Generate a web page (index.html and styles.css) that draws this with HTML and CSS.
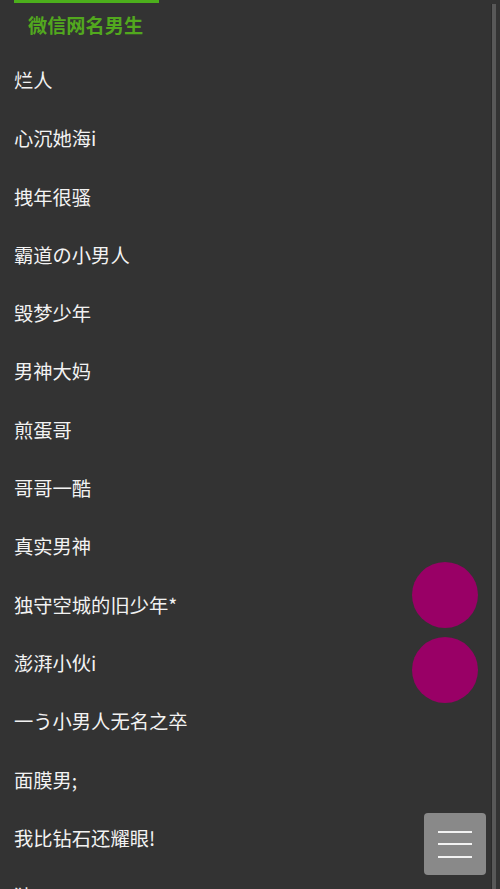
FILE: index.html
```html
<!DOCTYPE html>
<html lang="zh">
<head>
<meta charset="utf-8">
<title>微信网名男生</title>
<link rel="stylesheet" href="styles.css">
</head>
<body>
<div class="page">
  <div class="tab-bar"></div>
  <h1 class="title">微信网名男生</h1>
  <ul class="names">
    <li>烂人</li>
    <li>心沉她海i</li>
    <li>拽年很骚</li>
    <li>霸道の小男人</li>
    <li>毁梦少年</li>
    <li>男神大妈</li>
    <li>煎蛋哥</li>
    <li>哥哥一酷</li>
    <li>真实男神</li>
    <li>独守空城的旧少年*</li>
    <li>澎湃小伙i</li>
    <li>一う小男人无名之卒</li>
    <li>面膜男;</li>
    <li>我比钻石还耀眼!</li>
    <li>独</li>
  </ul>
</div>
<div class="fab fab-one"></div>
<div class="fab fab-two"></div>
<div class="menu-btn"><span></span><span></span><span></span></div>
<div class="scroll-track"></div>
</body>
</html>
```

FILE: styles.css
```css
html, body {
  margin: 0;
  padding: 0;
  background: #333333;
  height: 889px;
  overflow: hidden;
}
body {
  font-family: "Noto Sans CJK SC", "Noto Sans", sans-serif;
  color: #f2f2f2;
}
.page {
  padding-left: 14px;
}
.tab-bar {
  width: 145px;
  height: 3px;
  background: #4caf1c;
}
.title {
  margin: 0;
  padding-left: 14px;
  font-size: 19.2px;
  font-weight: bold;
  color: #52a81e;
  line-height: 28px;
  height: 28px;
  margin-top: 8px;
}
.names {
  list-style: none;
  margin: 0;
  padding: 0;
  margin-top: 12px;
}
.names li {
  font-size: 19.3px;
  line-height: 58.3px;
  height: 58.3px;
  white-space: nowrap;
}
.fab {
  position: fixed;
  left: 412px;
  width: 66px;
  height: 66px;
  border-radius: 50%;
  background: #990066;
}
.fab-one { top: 562px; }
.fab-two { top: 637px; }
.menu-btn {
  position: fixed;
  left: 424px;
  top: 813px;
  width: 62px;
  height: 62px;
  background: #898989;
  border-radius: 4px;
  display: flex;
  flex-direction: column;
  align-items: center;
  justify-content: center;
  gap: 10.5px;
}
.menu-btn span {
  display: block;
  width: 34px;
  height: 2px;
  background: #f2f2f2;
}
.scroll-track {
  position: fixed;
  left: 491px;
  top: 4px;
  width: 4px;
  bottom: 0;
  background: #585858;
  border-left: 1px solid #2a2a2a;
}
```
